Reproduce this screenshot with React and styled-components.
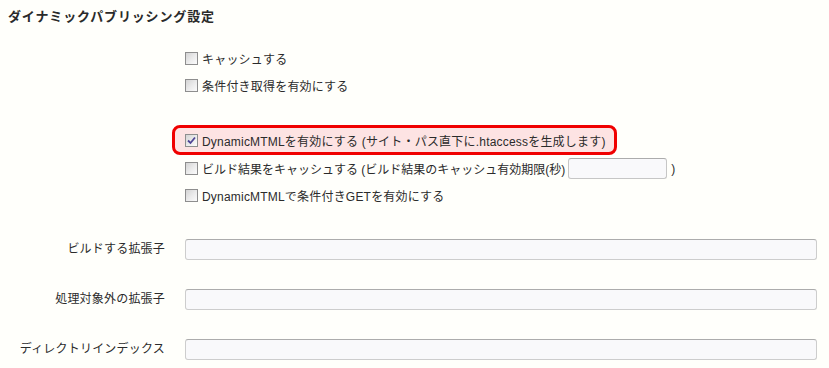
import React from "react";
import styled, { createGlobalStyle } from "styled-components";

const Global = createGlobalStyle`
  html, body { margin: 0; padding: 0; background: #fffffb; }
  body {
    font-family: "Liberation Sans", "Noto Sans CJK JP", sans-serif;
    font-size: 12px;
    color: #2b2b2b;
  }
`;

const Page = styled.div`
  width: 829px;
  height: 368px;
  overflow: hidden;
  background: #fffffb;
`;

const Title = styled.h2`
  margin: 0;
  padding: 8px 0 0 8px;
  height: 18px;
  line-height: 18px;
  font-size: 13px;
  font-weight: bold;
  letter-spacing: 0.85px;
  color: #2a2a2a;
`;

const Options = styled.div`
  display: flex;
  flex-direction: column;
  padding-left: 185px;
  margin-top: ${(p) => p.$top || 0}px;
`;

const Row = styled.label`
  display: flex;
  align-items: center;
  height: ${(p) => p.$h || 27}px;
  gap: 4px;
  white-space: nowrap;
  letter-spacing: ${(p) => (p.$tight ? 0 : 0.2)}px;
`;

const Highlight = styled.label`
  display: flex;
  align-items: center;
  gap: 4px;
  align-self: flex-start;
  white-space: nowrap;
  letter-spacing: 0.2px;
  margin-left: -13px;
  padding: 3px 8px 3px 10px;
  height: 18px;
  border: 3px solid #f00000;
  border-radius: 8px;
  background: #fde3e3;
`;

const Box = styled.span`
  box-sizing: border-box;
  flex: none;
  width: 13px;
  height: 13px;
  border: 1px solid #8e8e8e;
  background: linear-gradient(135deg, #d4d4d4 0%, #ececec 55%, #fbfbfb 100%);
  display: inline-flex;
  align-items: center;
  justify-content: center;
`;

const SmallInput = styled.span`
  box-sizing: border-box;
  display: inline-block;
  width: 99px;
  height: 21px;
  margin: 0 0 0 -1px;
  border: 1px solid #c6c6c6;
  border-top-color: #acacac;
  border-radius: 3px;
  background: #f9f9fb;
`;

const Fields = styled.div`
  display: grid;
  grid-template-columns: 165px 1fr;
  column-gap: 20px;
  grid-auto-rows: 50px;
  align-items: center;
  padding-right: 12px;
  margin-top: 15px;
`;

const Label = styled.div`
  text-align: right;
  white-space: nowrap;
  position: relative;
  top: -2px;
  letter-spacing: 0.2px;
`;

const Input = styled.input`
  box-sizing: border-box;
  width: 100%;
  height: 21px;
  margin: 0;
  border: 1px solid #cdcdcd;
  border-top-color: #acacac;
  border-radius: 3px;
  background: #f9f9fb;
  outline: none;
`;

function Check({ checked }) {
  return (
    <Box>
      {checked && (
        <svg width="9" height="9" viewBox="0 0 9 9">
          <path d="M1 4.5 L3.5 7 L8 1.5" fill="none" stroke="#4f4596" strokeWidth="1.8" />
        </svg>
      )}
    </Box>
  );
}

export default function App() {
  return (
    <Page>
      <Global />
      <Title>ダイナミックパブリッシング設定</Title>
      <Options $top={19}>
        <Row><Check />キャッシュする</Row>
        <Row><Check />条件付き取得を有効にする</Row>
      </Options>
      <Options $top={26}>
        <Highlight><Check checked />DynamicMTMLを有効にする (サイト・パス直下に.htaccessを生成します)</Highlight>
        <Row $h={27} $tight>
          <Check />ビルド結果をキャッシュする (ビルド結果のキャッシュ有効期限(秒)
          <SmallInput />)
        </Row>
        <Row><Check />DynamicMTMLで条件付きGETを有効にする</Row>
      </Options>
      <Fields>
        <Label>ビルドする拡張子</Label>
        <Input />
        <Label>処理対象外の拡張子</Label>
        <Input />
        <Label>ディレクトリインデックス</Label>
        <Input />
      </Fields>
    </Page>
  );
}
